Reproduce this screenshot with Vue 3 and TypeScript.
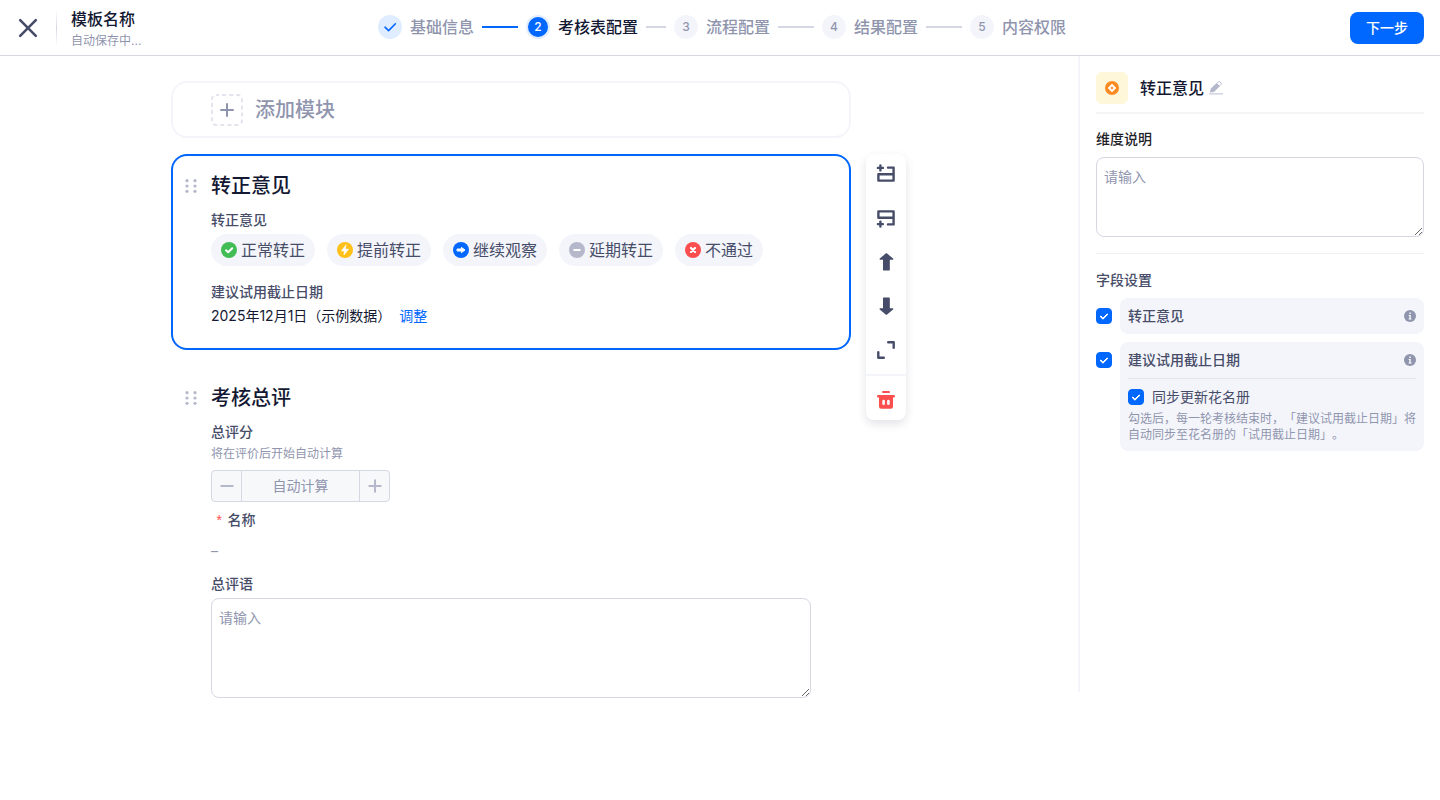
<script setup lang="ts">
import { ref } from 'vue'

interface Step {
  label: string
  state: 'done' | 'active' | 'todo'
}

interface Opinion {
  label: string
  kind: 'pass' | 'early' | 'watch' | 'delay' | 'fail'
  color: string
}

const steps: Step[] = [
  { label: '基础信息', state: 'done' },
  { label: '考核表配置', state: 'active' },
  { label: '流程配置', state: 'todo' },
  { label: '结果配置', state: 'todo' },
  { label: '内容权限', state: 'todo' },
]

const opinions: Opinion[] = [
  { label: '正常转正', kind: 'pass', color: '#42bd56' },
  { label: '提前转正', kind: 'early', color: '#ffc01a' },
  { label: '继续观察', kind: 'watch', color: '#0067ff' },
  { label: '延期转正', kind: 'delay', color: '#b4b8ca' },
  { label: '不通过', kind: 'fail', color: '#fb4e4e' },
]

const showOpinion = ref(true)
const showDeadline = ref(true)
const syncRoster = ref(true)
const description = ref('')
const comment = ref('')
</script>

<template>
  <div class="page">
    <header class="topbar">
      <div class="topbar-side">
        <button class="close" type="button" aria-label="关闭">
          <svg width="24" height="24" viewBox="0 0 24 24" fill="none" stroke="#474d69" stroke-width="2.6" stroke-linecap="round">
            <path d="M4.2 4.2 19.8 19.8M19.8 4.2 4.2 19.8" />
          </svg>
        </button>
        <span class="topbar-rule"></span>
        <div class="doc">
          <h1>模板名称</h1>
          <p>自动保存中...</p>
        </div>
      </div>
      <ol class="steps">
        <li v-for="(step, i) in steps" :key="step.label" class="step" :class="step.state">
          <span class="step-mark">
            <svg v-if="step.state === 'done'" width="14" height="14" viewBox="0 0 14 14" fill="none" stroke="#0067ff" stroke-width="1.6" stroke-linecap="round" stroke-linejoin="round">
              <path d="M2 7.2 5.6 10.6 12.4 3.8" />
            </svg>
            <template v-else>{{ i + 1 }}</template>
          </span>
          <span class="step-label">{{ step.label }}</span>
          <span v-if="i < steps.length - 1" class="step-line"></span>
        </li>
      </ol>
      <div class="topbar-side end">
        <button class="next" type="button">下一步</button>
      </div>
    </header>

    <div class="body">
      <main class="canvas">
        <div class="board">
          <button class="add" type="button">
            <span class="add-icon">
              <svg class="dash" width="32" height="32" viewBox="0 0 32 32" fill="none" stroke="#e3e4ee" stroke-width="2">
                <rect x="1" y="1" width="30" height="30" rx="4" stroke-dasharray="4 3.1" stroke-dashoffset="1" />
                <path d="M16 10v12M10 16h12" stroke="#9095ae" stroke-linecap="round" />
              </svg>
            </span>
            添加模块
          </button>

          <section class="card selected">
            <div class="card-head">
              <svg class="grip" width="12" height="14" viewBox="0 0 12 14" fill="#b4b8ca">
                <circle cx="2" cy="1.7" r="1.6" /><circle cx="10" cy="1.7" r="1.6" />
                <circle cx="2" cy="7" r="1.6" /><circle cx="10" cy="7" r="1.6" />
                <circle cx="2" cy="12.3" r="1.6" /><circle cx="10" cy="12.3" r="1.6" />
              </svg>
              <h2>转正意见</h2>
            </div>
            <h3>转正意见</h3>
            <ul class="chips">
              <li v-for="o in opinions" :key="o.kind" class="chip">
                <svg width="16" height="16" viewBox="0 0 16 16" fill="none" stroke="#fff" stroke-width="2" stroke-linecap="round" stroke-linejoin="round">
                  <circle cx="8" cy="8" r="8" :fill="o.color" stroke="none" />
                  <path v-if="o.kind === 'pass'" d="M5 8.3 7.2 10.3 11.2 6.2" />
                  <path v-else-if="o.kind === 'early'" d="M8.9 3 4.4 8.9H7.4L6.9 13 11.6 7.2H8.5Z" fill="#fff" stroke-width=".6" />
                  <path v-else-if="o.kind === 'watch'" d="M4.4 7H8.4V5.4L12 8 8.4 10.6V9H4.4Z" fill="#fff" stroke-width="1" />
                  <path v-else-if="o.kind === 'delay'" d="M5.2 8h5.6" />
                  <path v-else d="M6 6l4 4M10 6l-4 4" stroke-width="2.2" />
                </svg>
                {{ o.label }}
              </li>
            </ul>
            <h3>建议试用截止日期</h3>
            <p class="value">
              2025年12月1日（示例数据）<a href="#adjust">调整</a>
            </p>
          </section>

          <div class="tools" role="toolbar" aria-label="模块操作">
            <div class="tools-main">
              <button type="button" aria-label="在上方添加">
                <svg width="20" height="20" viewBox="0 0 20 20" fill="none" stroke="#474d69" stroke-width="2.4" stroke-linejoin="round" stroke-linecap="round">
                  <path d="M4.4 1.4v5M1.9 3.9h5" />
                  <path d="M12 3.6h5.6v13H2.4v-6.3h15.2" />
                </svg>
              </button>
              <button type="button" aria-label="在下方添加">
                <svg width="20" height="20" viewBox="0 0 20 20" fill="none" stroke="#474d69" stroke-width="2.4" stroke-linejoin="round" stroke-linecap="round">
                  <path d="M4.4 13.6v5M1.9 16.1h5" />
                  <path d="M12 16.4h5.6v-13H2.4v6.3h15.2" />
                </svg>
              </button>
              <button type="button" aria-label="上移">
                <svg width="20" height="20" viewBox="0 0 20 20" fill="#474d69" stroke="#474d69" stroke-width="1.4" stroke-linejoin="round">
                  <path d="M10.4 1.9 16.6 7H13.1V17.9H7.7V7H4.2Z" />
                </svg>
              </button>
              <button type="button" aria-label="下移">
                <svg width="20" height="20" viewBox="0 0 20 20" fill="#474d69" stroke="#474d69" stroke-width="1.4" stroke-linejoin="round">
                  <path d="M10.4 18.1 16.6 13H13.1V2.1H7.7V13H4.2Z" />
                </svg>
              </button>
              <button type="button" aria-label="展开">
                <svg width="20" height="20" viewBox="0 0 20 20" fill="none" stroke="#474d69" stroke-width="2.4" stroke-linejoin="round" stroke-linecap="round">
                  <path d="M12.2 2.3h5.5v5.5M7.8 17.7H2.3v-5.5" />
                </svg>
              </button>
            </div>
            <div class="tools-danger">
              <button type="button" aria-label="删除">
                <svg width="20" height="20" viewBox="0 0 20 20">
                  <path d="M7 2.1h6" stroke="#fb4e4e" stroke-width="2" stroke-linecap="round" />
                  <path d="M2.2 5h15.6a1.1 1.1 0 0 1 0 2.4H17V16.6a2.2 2.2 0 0 1-2.2 2.2H5.2A2.2 2.2 0 0 1 3 16.6V7.4H2.2a1.1 1.1 0 0 1 0-2.4Z" fill="#fb4e4e" />
                  <path d="M7.6 11v2.8M12.4 11v2.8" stroke="#fff" stroke-width="2.6" stroke-linecap="round" />
                </svg>
              </button>
            </div>
          </div>

          <section class="card">
            <div class="card-head">
              <svg class="grip" width="12" height="14" viewBox="0 0 12 14" fill="#b4b8ca">
                <circle cx="2" cy="1.7" r="1.6" /><circle cx="10" cy="1.7" r="1.6" />
                <circle cx="2" cy="7" r="1.6" /><circle cx="10" cy="7" r="1.6" />
                <circle cx="2" cy="12.3" r="1.6" /><circle cx="10" cy="12.3" r="1.6" />
              </svg>
              <h2>考核总评</h2>
            </div>
            <label class="field-label" for="score">总评分</label>
            <p class="hint">将在评价后开始自动计算</p>
            <div class="stepper">
              <button type="button" disabled aria-label="减少">
                <svg width="14" height="14" viewBox="0 0 14 14" stroke="#b4b8ca" stroke-width="2"><path d="M.5 7h13" /></svg>
              </button>
              <input id="score" type="text" disabled placeholder="自动计算" />
              <button type="button" disabled aria-label="增加">
                <svg width="14" height="14" viewBox="0 0 14 14" stroke="#b4b8ca" stroke-width="2"><path d="M.5 7h13M7 .5v13" /></svg>
              </button>
            </div>
            <h3 class="required"><span>*</span>名称</h3>
            <p class="empty">–</p>
            <label class="field-label" for="comment">总评语</label>
            <textarea id="comment" v-model="comment" class="comment" placeholder="请输入"></textarea>
          </section>
        </div>
      </main>

      <aside class="panel">
        <div class="panel-head">
          <span class="badge">
            <svg width="14" height="14" viewBox="0 0 14 14">
              <circle cx="7" cy="7" r="7" fill="#fd8a22" />
              <path d="M7 3 11 7 7 11 3 7Z" fill="#fff" stroke="#fff" stroke-width=".6" stroke-linejoin="round" />
              <path d="M7 5.4 8.6 7 7 8.6 5.4 7Z" fill="#fd8a22" />
            </svg>
          </span>
          <h2>转正意见</h2>
          <button class="edit" type="button" aria-label="编辑名称">
            <svg width="14" height="14" viewBox="0 0 14 14">
              <path d="M0 12h14v1.6H0Z" fill="#d5d7e3" />
              <path d="M1 11.4 1.6 7.8 7.6 1.9 11 5.1 5 11Z" fill="#b4b8ca" />
              <path d="M8.3 1.7 9.5.9a1 1 0 0 1 1.3 0L12.1 2.1a1 1 0 0 1 0 1.3L11 4.5" fill="none" stroke="#b4b8ca" />
            </svg>
          </button>
        </div>
        <label class="desc-label" for="description">维度说明</label>
        <textarea id="description" v-model="description" class="description" placeholder="请输入"></textarea>
        <h3 class="settings-title">字段设置</h3>
        <div class="setting">
          <input id="f-opinion" v-model="showOpinion" type="checkbox" />
          <div class="setting-box">
            <div class="setting-head">
              <label for="f-opinion">转正意见</label>
              <svg width="12" height="12" viewBox="0 0 12 12"><circle cx="6" cy="6" r="6" fill="#9095ae" /><path d="M5.4 2.5h1.4v1.4H5.4ZM4.7 5h2v3.4h.8v1H4.6v-1h.8V6h-.7Z" fill="#fff" /></svg>
            </div>
          </div>
        </div>
        <div class="setting">
          <input id="f-deadline" v-model="showDeadline" type="checkbox" />
          <div class="setting-box">
            <div class="setting-head ruled">
              <label for="f-deadline">建议试用截止日期</label>
              <svg width="12" height="12" viewBox="0 0 12 12"><circle cx="6" cy="6" r="6" fill="#9095ae" /><path d="M5.4 2.5h1.4v1.4H5.4ZM4.7 5h2v3.4h.8v1H4.6v-1h.8V6h-.7Z" fill="#fff" /></svg>
            </div>
            <div class="sync">
              <input id="f-sync" v-model="syncRoster" type="checkbox" />
              <label for="f-sync">同步更新花名册</label>
            </div>
            <p class="sync-note">勾选后，每一轮考核结束时，「建议试用截止日期」将自动同步至花名册的「试用截止日期」。</p>
          </div>
        </div>
      </aside>
    </div>
  </div>
</template>

<style>
body {
  margin: 0;
  background: #fff;
}
</style>

<style scoped>
.page {
  font-family: Inter, "Noto Sans CJK SC", sans-serif;
  font-size: 14px;
  line-height: 22px;
  color: #474d69;
  text-spacing-trim: space-all;
}
.page * {
  box-sizing: border-box;
}
h1, h2, h3, p, ol, ul {
  margin: 0;
  padding: 0;
  list-style: none;
}
button, input, textarea {
  font: inherit;
  color: inherit;
  margin: 0;
}
button {
  padding: 0;
  border: 0;
  background: none;
  cursor: pointer;
}
svg {
  display: block;
  flex: none;
}

.topbar {
  display: flex;
  align-items: center;
  height: 56px;
  padding: 0 16px;
  border-bottom: 1px solid #d5d7e3;
}
.topbar-side {
  flex: 1;
  display: flex;
  align-items: center;
}
.topbar-side.end {
  justify-content: flex-end;
}
.topbar-rule {
  width: 1px;
  height: 36px;
  margin: 0 14px 0 16px;
  background: linear-gradient(#fff, #d5d7e3, #fff);
}
.doc {
  padding-top: 2px;
}
.doc h1 {
  font-size: 16px;
  line-height: 24px;
  font-weight: 500;
  color: #141933;
}
.doc p {
  font-size: 12px;
  line-height: 20px;
  color: #9095ae;
}
.steps {
  display: flex;
  padding: 0 0 2px 4px;
  font-size: 16px;
  line-height: 24px;
}
.step {
  display: flex;
  align-items: center;
  gap: 8px;
  width: 148px;
  padding-right: 8px;
  color: #9095ae;
  white-space: nowrap;
}
.step:last-child {
  width: auto;
  padding-right: 0;
}
.step-mark {
  display: flex;
  align-items: center;
  justify-content: center;
  width: 24px;
  height: 24px;
  border-radius: 50%;
  background: #f4f5fb;
  font-size: 12px;
  font-weight: 500;
}
.step-label {
  font-weight: 500;
}
.step-line {
  flex: 1;
  height: 2px;
  background: #d5d7e3;
}
.done .step-mark {
  background: #e0ecff;
}
.done .step-line {
  background: #0067ff;
}
.active .step-mark {
  border: 2px solid #e0ecff;
  background: #0067ff;
  color: #fff;
}
.active .step-label {
  color: #141933;
}
.next {
  height: 32px;
  padding: 0 16px;
  border-radius: 8px;
  background: #0067ff;
  color: #fff;
  font-weight: 500;
}

.body {
  display: flex;
  align-items: flex-start;
}
.canvas {
  flex: 1;
  min-width: 0;
  padding: 25px 24px 0;
}
.board {
  display: grid;
  grid-template-columns: minmax(0, 680px) 40px;
  gap: 16px 15px;
  max-width: 736px;
  margin: 0 auto;
}
.add {
  display: flex;
  align-items: center;
  gap: 12px;
  height: 57px;
  padding: 0 38px;
  border: 2px solid #f4f5fb;
  border-radius: 16px;
  color: #9095ae;
  font-size: 20px;
  font-weight: 500;
  line-height: 28px;
}
.card {
  grid-column: 1;
  padding: 16px 38px 0;
  border: 2px solid transparent;
  border-radius: 16px;
}
.card.selected {
  border-color: #0067ff;
  padding-bottom: 21px;
}
.card-head {
  display: flex;
  align-items: center;
  gap: 14px;
  margin: 0 0 9px -26px;
}
.card-head h2 {
  font-size: 20px;
  line-height: 28px;
  font-weight: 500;
  color: #141933;
}
.card h3,
.field-label {
  display: block;
  font-size: 14px;
  line-height: 22px;
  font-weight: 500;
}
.chips {
  display: flex;
  flex-wrap: wrap;
  gap: 12px;
  margin: 3px 0 15px;
}
.chip {
  display: flex;
  align-items: center;
  gap: 4px;
  height: 32px;
  padding: 0 10px;
  border-radius: 16px;
  background: #f4f5fb;
  font-size: 16px;
}
.value {
  margin-top: 2px;
  color: #141933;
}
.value a {
  margin-left: 8px;
  color: #0067ff;
  text-decoration: none;
}
.hint {
  margin-top: 1px;
  font-size: 12px;
  line-height: 20px;
  color: #9095ae;
}
.stepper {
  display: flex;
  width: 179px;
  height: 32px;
  margin: 6px 0 7px;
  overflow: hidden;
  border: 1px solid #d5d7e3;
  border-radius: 4px;
  background: #f7f8fa;
}
.stepper button {
  display: flex;
  align-items: center;
  justify-content: center;
  width: 29px;
}
.stepper input {
  flex: 1;
  min-width: 0;
  padding: 0;
  border: solid #d5d7e3;
  border-width: 0 1px;
  background: none;
  text-align: center;
}
input::placeholder,
textarea::placeholder {
  color: #9095ae;
  opacity: 1;
}
.card h3.required {
  display: flex;
  height: 22px;
  padding-left: 4px;
}
.required span {
  margin-right: 4px;
  padding-top: 2px;
  color: #fb4e4e;
  font-family: "Liberation Mono", monospace;
  font-weight: 400;
}
.empty {
  margin: 9px 0 11px;
  color: #9095ae;
}
textarea {
  display: block;
  width: 100%;
  padding: 8px 7px;
  border: 1px solid #d5d7e3;
  border-radius: 8px;
  background: #fff;
  outline: 0;
}
.comment {
  height: 100px;
  margin-top: 3px;
}

.tools {
  grid-column: 2;
  grid-row: 2 / span 2;
  align-self: start;
  overflow: hidden;
  border-radius: 8px;
  background: #fff;
  box-shadow: 0 4px 10px rgba(20, 25, 51, 0.12);
}
.tools-main {
  display: grid;
  gap: 4px;
  padding-bottom: 4px;
  border-bottom: 2px solid #f4f5fb;
}
.tools-danger {
  padding-top: 4px;
}
.tools button {
  display: flex;
  align-items: center;
  justify-content: center;
  width: 40px;
  height: 40px;
}

.panel {
  width: 362px;
  min-height: calc(100vh - 164px);
  padding: 16px 16px 0;
  border-left: 2px solid #f4f5fb;
}
.panel-head {
  display: flex;
  align-items: center;
  padding-bottom: 8px;
  border-bottom: 2px solid #f4f5f7;
}
.badge {
  display: flex;
  align-items: center;
  justify-content: center;
  width: 32px;
  height: 32px;
  margin-right: 12px;
  border-radius: 6px;
  background: #fff7d9;
}
.panel-head h2 {
  font-size: 16px;
  line-height: 24px;
  font-weight: 500;
  color: #141933;
}
.edit {
  margin-left: 5px;
}
.desc-label {
  display: block;
  margin: 14px 0 7px;
  font-weight: 500;
  color: #1f2329;
}
.description {
  height: 80px;
}
.settings-title {
  margin: 16px 0 7px;
  padding-top: 15px;
  border-top: 1px solid #f0f1f5;
  font-size: 14px;
  font-weight: 500;
}
.setting {
  display: flex;
  align-items: flex-start;
  gap: 8px;
  margin-bottom: 8px;
}
.setting > input {
  margin-top: 10px;
}
.setting-box {
  flex: 1;
  padding: 0 8px;
  border-radius: 8px;
  background: #f4f5fb;
}
.setting-head {
  display: flex;
  align-items: center;
  justify-content: space-between;
  height: 36px;
  font-weight: 500;
}
.ruled {
  height: 37px;
  border-bottom: 1px solid #e3e4ec;
}
.sync {
  display: flex;
  align-items: center;
  gap: 8px;
  padding-top: 7px;
}
.sync-note {
  padding: 3px 0 8px;
  font-size: 12px;
  line-height: 16px;
  color: #9095ae;
}
input[type="checkbox"] {
  appearance: none;
  display: grid;
  place-items: center;
  flex: none;
  width: 16px;
  height: 16px;
  border: 1px solid #b4b8ca;
  border-radius: 4px;
}
input[type="checkbox"]:checked {
  border-color: #0067ff;
  background: #0067ff;
}
input[type="checkbox"]:checked::after {
  content: "";
  box-sizing: border-box;
  width: 8px;
  height: 5px;
  margin-bottom: 2px;
  border: solid #fff;
  border-width: 0 0 2px 2px;
  border-radius: 1px;
  transform: rotate(-45deg);
}
</style>
